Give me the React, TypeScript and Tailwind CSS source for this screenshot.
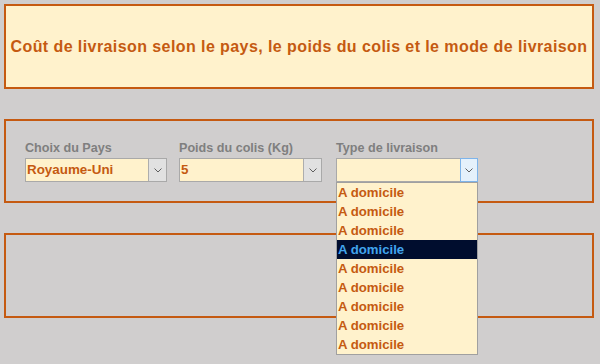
import React from "react";

const FONT = { fontFamily: "'Liberation Sans', Arial, sans-serif" };

function Chevron({ className = "" }: { className?: string }) {
  return (
    <svg width="8" height="5" viewBox="0 0 8 5" className={className}>
      <polyline points="0.5,0.5 4,4 7.5,0.5" fill="none" stroke="#5f5f5f" strokeWidth="1" />
    </svg>
  );
}

function Combo({ value, active = false, children }: { value: string; active?: boolean; children?: React.ReactNode }) {
  return (
    <div className="relative">
      <div className="flex h-[24px] border border-[#a9a9a9] bg-[#fff2cc]">
        <div className="flex-1 pl-[1px] text-[13.4px] font-bold leading-[22px] text-[#c55a11]">{value}</div>
        {active ? (
          <div className="flex w-[18px] items-center justify-center border border-[#7eb4ea] bg-[#e5f1fb] -my-[1px] -mr-[1px]">
            <Chevron />
          </div>
        ) : (
          <div className="flex w-[18px] items-center justify-center border-l border-[#adadad] bg-[#e1e1e1]">
            <Chevron />
          </div>
        )}
      </div>
      {children}
    </div>
  );
}

export default function App() {
  const items = Array.from({ length: 9 }, (_, i) => i);
  return (
    <div className="flex h-[364px] w-[600px] flex-col bg-[#d0cece] px-[4px] pt-[4px]" style={FONT}>
      <div className="flex h-[85px] w-[590px] items-center justify-center border-2 border-[#c55a11] bg-[#fff2cc]">
        <span className="text-[16px] font-bold tracking-[0.42px] text-[#c55a11]">
          Coût de livraison selon le pays, le poids du colis et le mode de livraison
        </span>
      </div>

      <div className="relative z-10 mt-[30px] h-[84px] w-[590px] border-2 border-[#c55a11] pl-[19px] pt-[19px]">
        <div className="flex">
          <div className="w-[154px]">
            <div className="h-[18px] text-[12.6px] font-bold leading-[17px] text-[#7f7f7f]">Choix du Pays</div>
            <div className="w-[142px]">
              <Combo value="Royaume-Uni" />
            </div>
          </div>
          <div className="w-[157px]">
            <div className="h-[18px] text-[12.6px] font-bold leading-[17px] text-[#7f7f7f]">Poids du colis (Kg)</div>
            <div className="w-[143px]">
              <Combo value="5" />
            </div>
          </div>
          <div className="w-[142px]">
            <div className="h-[18px] text-[12.6px] font-bold leading-[17px] text-[#7f7f7f]">Type de livraison</div>
            <Combo value="" active>
              <div className="absolute left-0 top-full w-[142px] border border-[#a0a0a0] bg-[#fff2cc]">
                {items.map((i) => (
                  <div
                    key={i}
                    className={
                      i === 3
                        ? "h-[19px] bg-[#000d2e] pl-[1px] text-[13.2px] font-bold leading-[20px] text-[#41a5ee]"
                        : "h-[19px] pl-[1px] text-[13.2px] font-bold leading-[20px] text-[#c55a11]"
                    }
                  >
                    A domicile
                  </div>
                ))}
              </div>
            </Combo>
          </div>
        </div>
      </div>

      <div className="mt-[30px] h-[85px] w-[590px] border-2 border-[#c55a11]" />
    </div>
  );
}
